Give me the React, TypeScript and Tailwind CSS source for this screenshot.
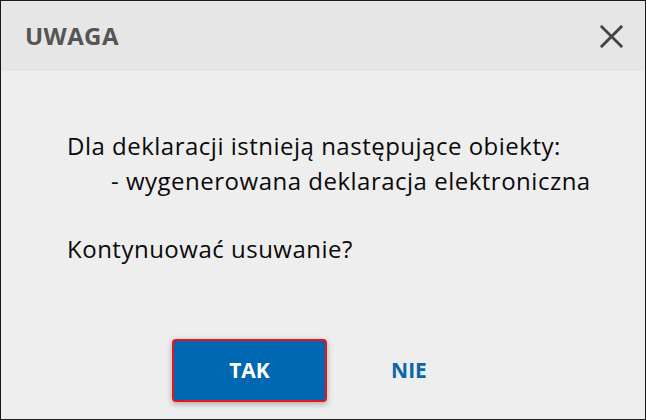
export default function App() {
  return (
    <div className="w-[646px] h-[420px] bg-white">
      <div className="w-full h-full border border-[#1a1a1a] bg-[#eeeeee] flex flex-col font-['Open_Sans',sans-serif]">
        <div className="h-[70px] bg-[#e6e6e6] flex items-center justify-between pl-[24px] pr-[21px]">
          <h1 className="text-[24px] font-bold text-[#555555] tracking-[0.4px]">UWAGA</h1>
          <button className="w-[26px] h-[26px] flex items-center justify-center text-[#444444]">
            <svg width="23" height="23" viewBox="0 0 24 24" fill="none" stroke="currentColor" strokeWidth="3" strokeLinecap="square">
              <path d="M2 2L22 22M22 2L2 22" />
            </svg>
          </button>
        </div>
        <div className="flex-1 flex flex-col">
          <div className="pl-[66px] pt-[58px] text-[24px] leading-[34px] tracking-[0.5px] text-[#0a0a0a]">
            <p>Dla deklaracji istnieją następujące obiekty:</p>
            <p className="pl-[44px] pt-[1px]">- wygenerowana deklaracja elektroniczna</p>
            <p>&nbsp;</p>
            <p>Kontynuować usuwanie?</p>
          </div>
          <div className="mt-auto mb-[17px] flex items-center gap-[44px] pl-[171px]">
            <button className="w-[155px] h-[63px] rounded-[4px] border-2 border-[#e8141c] bg-[#0068b2] text-white text-[21px] font-bold shadow-[0_2px_6px_rgba(0,0,0,0.3)]">
              TAK
            </button>
            <button className="w-[76px] h-[63px] text-[#0a67a8] text-[21px] font-bold">
              NIE
            </button>
          </div>
        </div>
      </div>
    </div>
  );
}
